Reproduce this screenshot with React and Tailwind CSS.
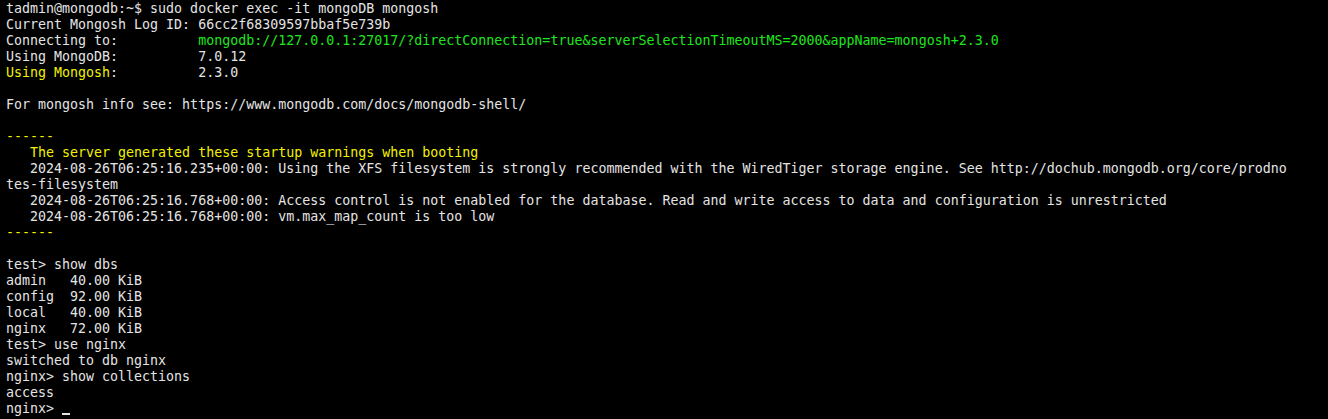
const W = "text-[#e4e4e4]";
const G = "text-[#1ee61e]";
const Y = "text-[#f2f200]";

const lines = [
  [["tadmin@mongodb:~$ sudo docker exec -it mongoDB mongosh", W]],
  [["Current Mongosh Log ID: 66cc2f68309597bbaf5e739b", W]],
  [
    ["Connecting to:          ", W],
    ["mongodb://127.0.0.1:27017/?directConnection=true&serverSelectionTimeoutMS=2000&appName=mongosh+2.3.0", G],
  ],
  [["Using MongoDB:          7.0.12", W]],
  [["Using Mongosh", Y], [":          2.3.0", W]],
  [["", W]],
  [["For mongosh info see: https://www.mongodb.com/docs/mongodb-shell/", W]],
  [["", W]],
  [["------", Y]],
  [["   The server generated these startup warnings when booting", Y]],
  [["   2024-08-26T06:25:16.235+00:00: Using the XFS filesystem is strongly recommended with the WiredTiger storage engine. See http://dochub.mongodb.org/core/prodno", W]],
  [["tes-filesystem", W]],
  [["   2024-08-26T06:25:16.768+00:00: Access control is not enabled for the database. Read and write access to data and configuration is unrestricted", W]],
  [["   2024-08-26T06:25:16.768+00:00: vm.max_map_count is too low", W]],
  [["------", Y]],
  [["", W]],
  [["test> show dbs", W]],
  [["admin   40.00 KiB", W]],
  [["config  92.00 KiB", W]],
  [["local   40.00 KiB", W]],
  [["nginx   72.00 KiB", W]],
  [["test> use nginx", W]],
  [["switched to db nginx", W]],
  [["nginx> show collections", W]],
  [["access", W]],
];

export default function App() {
  return (
    <div className="w-[1328px] h-[419px] bg-black overflow-hidden pl-[6px] pt-[1px] font-['DejaVu_Sans_Mono','Liberation_Mono',monospace] text-[13.3px] leading-[16px] whitespace-pre">
      {lines.map((parts, i) => (
        <div key={i} className="h-[16px]">
          {parts.map(([t, c], j) => (
            <span key={j} className={c}>
              {t}
            </span>
          ))}
        </div>
      ))}
      <div className="h-[16px] flex items-end">
        <span className={W}>nginx&gt; </span>
        <span className="w-[8px] h-[2px] bg-[#e4e4e4] mb-[2px]" />
      </div>
    </div>
  );
}
